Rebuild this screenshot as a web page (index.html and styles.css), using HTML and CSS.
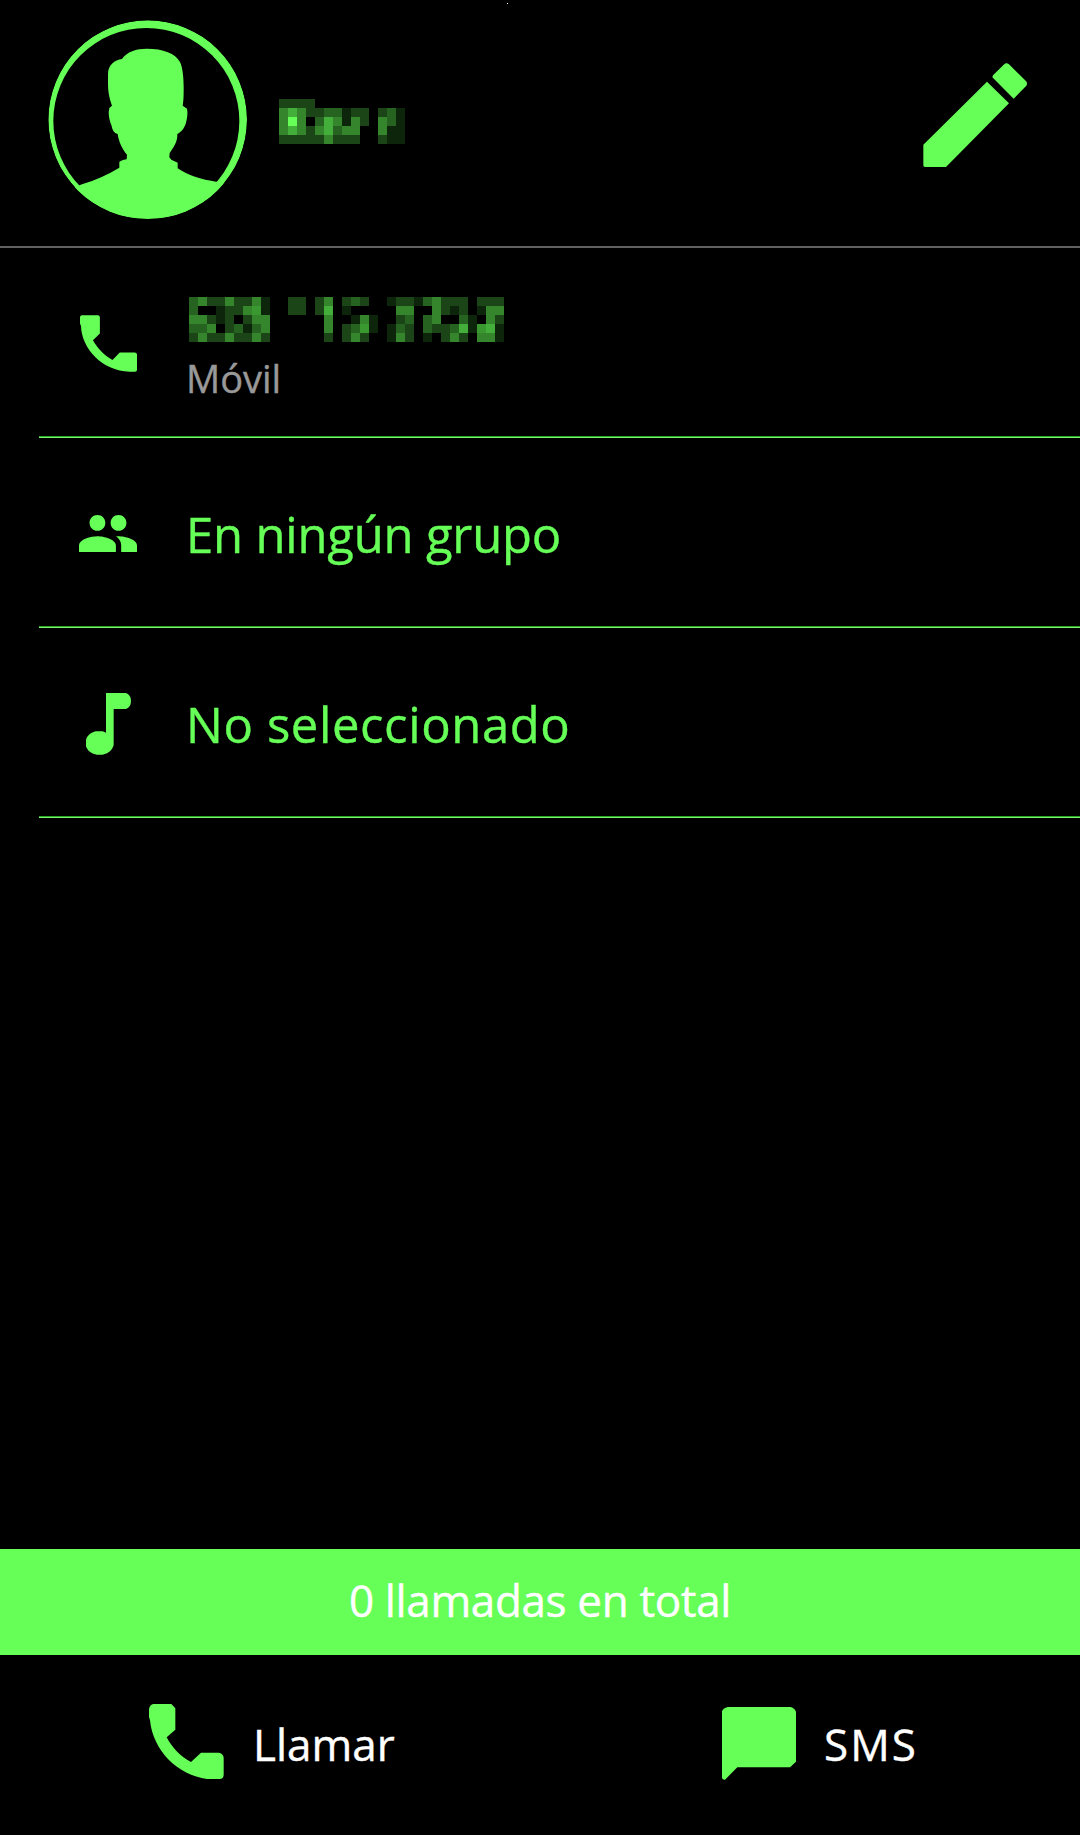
FILE: index.html
```
<!DOCTYPE html>
<html lang="es">
<head>
  <meta charset="utf-8">
  <meta name="viewport" content="width=device-width, initial-scale=1.0">
  <title>Contacto</title>
  <link rel="stylesheet" href="styles.css">
</head>
<body>
  <div class="dot"></div>
  <header class="header">
    <svg class="avatar" viewBox="54 60 600 600">
      <clipPath id="round"><circle cx="353" cy="359" r="298"/></clipPath>
      <g clip-path="url(#round)">
        <circle cx="353" cy="359" r="298"/>
        <circle class="hole" cx="349" cy="363" r="279"/>
        <path d="M100 575L156 553Q215 535 268 503V486Q272 481 290 478L291 464C278 450 266 425 263 402C252 399 247 390 245 378C239 365 236 350 236 337L238 324L246 317C236 290 234 270 234 250V222C234 195 254 180 276 177C290 155 320 146 350 146C400 146 436 160 450 186C459 205 461 240 461 260C461 285 461 300 458 317L471 326C474 338 472 355 467 372C462 384 457 394 442 402C443 425 432 440 419 459L418 472L424 479L443 488V505C475 526 510 538 562 546L620 560V655H100Z"/>
      </g>
    </svg>
    <svg class="mosaic name" id="name"></svg>
    <svg class="edit" viewBox="69 69 312 312">
      <path d="M70 314L261 125L327 190L138 381H75Q70 381 70 376ZM279 106L311 74Q319 66 327 73L377 122Q384 129 379 137L341 176L277 112Z"/>
    </svg>
  </header>

  <main class="list">
    <div class="row">
      <svg class="icon phone" viewBox="150 75 172 171"><path d="M155 75H205Q210 76 210 82V130L189 151C203 175 222 196 248 210L270 188H316Q322 189 322 194V240Q322 246 316 246H300C215 243 155 175 153 108L150 100V81Q150 76 155 75Z"/></svg>
      <div class="info">
        <svg class="mosaic" id="number"></svg>
        <span class="type">Móvil</span>
      </div>
    </div>
    <div class="row">
      <svg class="icon people" viewBox="1 5 22 14"><path d="M16 11c1.66 0 2.99-1.34 2.99-3S17.66 5 16 5c-1.66 0-3 1.34-3 3s1.34 3 3 3zm-8 0c1.66 0 2.99-1.34 2.99-3S9.66 5 8 5C6.34 5 5 6.34 5 8s1.34 3 3 3zm0 2c-2.33 0-7 1.17-7 3.5V19h14v-2.5c0-2.33-4.67-3.5-7-3.5zm8 0c-.29 0-.62.02-.97.05 1.16.84 1.97 1.97 1.97 3.45V19h6v-2.5c0-2.33-4.67-3.5-7-3.5z"/></svg>
      <span class="label group">En ningún grupo</span>
    </div>
    <div class="row">
      <svg class="icon note" viewBox="168 248 135 186"><path d="M228 248H288Q303 254 303 271Q303 290 288 296H251V405C246 420 235 430 218 433H200C182 430 172 420 168 408V388C172 375 184 365 200 363H218L228 367Z"/></svg>
      <span class="label tone">No seleccionado</span>
    </div>
  </main>

  <div class="total"><span>0 llamadas en total</span></div>

  <footer class="actions">
    <div class="action call">
      <svg class="bigphone" viewBox="58 131 225 225"><path d="M70 131H125L137 144V208L111 231C128 263 152 288 184 305L214 277H268Q282 281 282 293V344Q281 356 270 356H232C145 345 70 272 61 180L58 170V146Q60 134 70 131Z"/></svg>
      <span>Llamar</span>
    </div>
    <div class="action sms">
      <svg class="bubble" viewBox="65 204 222 219"><path d="M82 204H271Q284 208 287 219V368L269 385H111L74 422Q65 423 65 414V217Q69 207 82 204Z"/></svg>
      <span>SMS</span>
    </div>
  </footer>

  <script>
    // hidden name and number, one character per 9px block, "." is empty
    var shades = {
      1: "#0d260b", 2: "#1b4417", 3: "#266320", 4: "#34852c",
      5: "#3a9831", 6: "#43ae3a", 9: "#66ff57"
    };
    function draw_mosaic(id, rows) {
      var size = 9;
      var svg = document.getElementById(id);
      var rects = "";
      svg.setAttribute("width", rows[0].length * size);
      svg.setAttribute("height", rows.length * size);
      for (var y = 0; y < rows.length; y++) {
        for (var x = 0; x < rows[y].length; x++) {
          if (rows[y][x] != ".") {
            rects += '<rect x="' + x * size + '" y="' + y * size + '" width="9" height="9" fill="' + shades[rows[y][x]] + '"/>';
          }
        }
      }
      svg.innerHTML = rects;
    }
    draw_mosaic("name", [
      "2222..........",
      "4642233122.231",
      "494.364142.431",
      "464246344..411",
      "222224222..211"
    ]);
    draw_mosaic("number", [
      "342242241..22.24.232..122134222.222",
      "3..122451..22.26.1.....44..4212.144",
      "44212.244......4..141..23.34..31.42",
      "334.23134......4.2351.132.322361561",
      "242242242......2.242..142.1.242.441"
    ]);
  </script>
</body>
</html>
```
FILE: styles.css
```
* {
  box-sizing: border-box;
}
body {
  margin: 0;
  height: 1835px;
  display: flex;
  flex-direction: column;
  background-color: #000;
  color: #66ff57;
  font-family: "Open Sans", "Noto Sans", sans-serif;
  -webkit-text-stroke: 0.4px;
  overflow: hidden;
}
svg {
  display: block;
  flex: none;
  fill: #66ff57;
}
.dot {
  position: absolute;
  top: 3px;
  left: 507px;
  width: 1px;
  height: 1px;
  background-color: #fff;
}
.header {
  height: 248px;
  display: flex;
  align-items: flex-start;
  padding: 20px 53px 0 48px;
  border-bottom: 2px solid #606060;
}
.avatar {
  width: 200px;
  height: 200px;
}
.hole {
  fill: #000;
}
.mosaic {
  shape-rendering: crispEdges;
}
.name {
  margin: 79px 0 0 31px;
}
.edit {
  width: 104px;
  height: 104px;
  margin: 43px 0 0 auto;
}
.row {
  height: 190px;
  margin-left: 39px;
  display: grid;
  grid-template-columns: 147px auto;
  align-items: center;
  padding-top: 1px;
  /* two tone divider */
  background: linear-gradient(#27a81f 50%, #7df272 50%) bottom / 100% 2px no-repeat;
}
.icon {
  margin-left: 41px;
}
.phone {
  width: 57px;
  height: 57px;
}
.people {
  width: 58px;
  height: 37px;
  margin-left: 40px;
}
.note {
  width: 45px;
  height: 62px;
  margin-left: 47px;
}
.info {
  padding-top: 16px;
}
.info .mosaic {
  margin: 0 0 8px 3px;
}
.type {
  display: block;
  color: #999;
  font-size: 38px;
  line-height: 56px;
}
.label {
  font-size: 49px;
  white-space: nowrap;
}
.group {
  letter-spacing: -0.2px;
}
.tone {
  letter-spacing: 0.6px;
}
.total {
  height: 106px;
  margin-top: auto;
  background-color: #66ff57;
  color: #fff;
  font-size: 44px;
  line-height: 102px;
  letter-spacing: -0.35px;
  text-align: center;
}
.actions {
  height: 180px;
  display: grid;
  grid-template-columns: 1fr 1fr;
  color: #fff;
  font-size: 44px;
}
.action {
  display: flex;
  align-items: center;
}
.action span {
  margin-top: -3px;
}
.call {
  padding-left: 149px;
  gap: 29px;
}
.bigphone {
  width: 75px;
  height: 75px;
  margin-top: -7px;
}
.sms {
  padding-left: 182px;
  gap: 28px;
}
.sms span {
  letter-spacing: 2px;
}
.bubble {
  width: 74px;
  height: 73px;
  margin-top: -3px;
}
```
